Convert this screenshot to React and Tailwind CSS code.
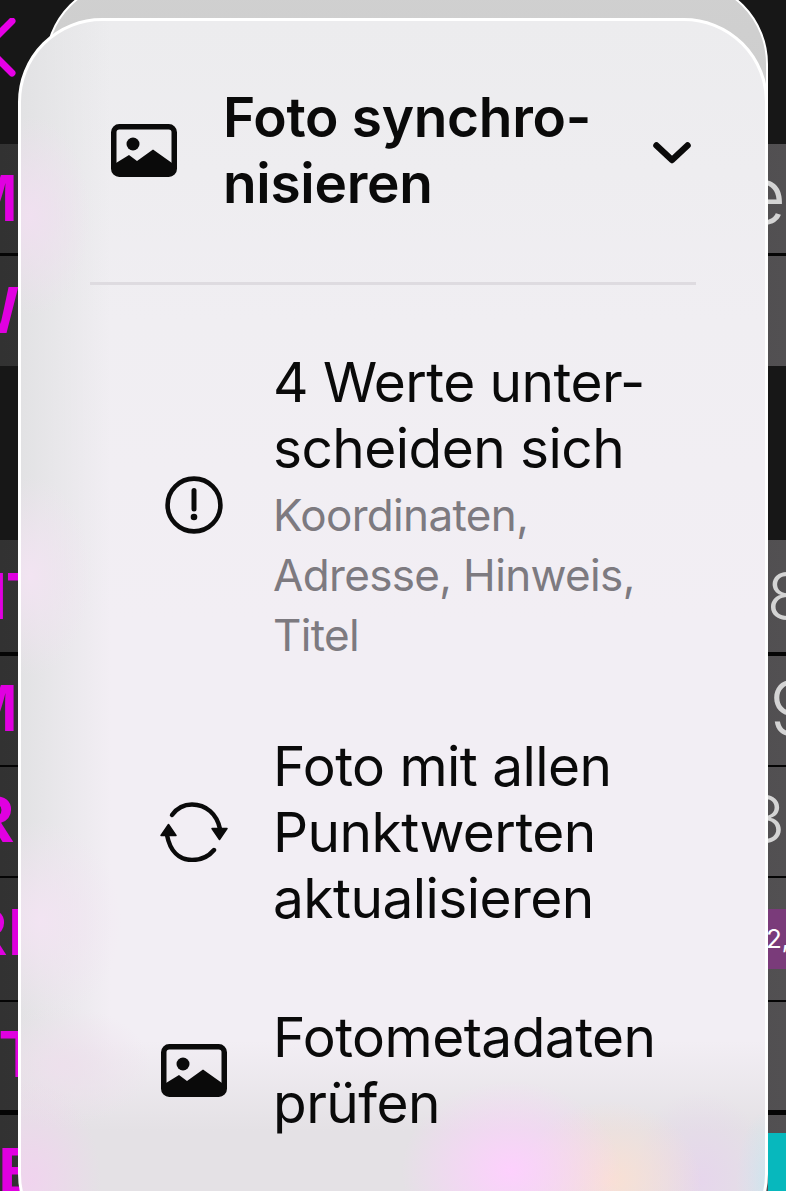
import React from 'react';

// hidden list behind the sheet, only the outer edges of each row show
const rows = [
    { cls: 'h-[112px] pt-[16px] border-b-[3px]', left: 'M', leftCls: '-ml-[37px]', right: 'e', rightCls: 'mr-0 -mt-[3px] text-[80px]' },
    { cls: 'h-[110px] pt-[16px] mb-[174px]', left: 'W', leftCls: '-ml-[44px]' },
    { cls: 'h-[116px] pt-[18px] border-b-[4px]', left: 'IT', leftCls: '-ml-[11px]', right: '8', rightCls: '-mr-[21px]' },
    { cls: 'h-[111px] pt-[14px] border-b-[2px]', left: 'M', leftCls: '-ml-[37px]', right: '49', rightCls: '-mr-[28px] text-[74px]' },
    { cls: 'h-[111px] pt-[14px] border-b-[2px]', left: 'R', leftCls: '-ml-[33px]', right: '3', rightCls: 'mr-[1px]' },
    { cls: 'h-[124px] pt-[16px] border-b-[2px]', left: 'RE', leftCls: '-ml-[40px]', badge: true },
    { cls: 'h-[113px] pt-[14px] border-b-[5px]', left: 'T', leftCls: 'ml-0' },
    { cls: 'h-[76px] pt-[18px]', left: 'E', leftCls: '-ml-[2px]', teal: true },
];

const PhotoIcon = ({ className }) => (
    <svg viewBox="0 0 66 53" className={className} fill="none">
        <rect x="2.75" y="2.75" width="60.5" height="47.5" rx="5.5" stroke="#0a0a0a" strokeWidth="5.5" />
        <circle cx="22" cy="20" r="6.5" fill="#0a0a0a" />
        <path d="M5 39 L18 31 L26 37 L42 25.5 L61 39 V48 Q61 50 59 50 H7 Q5 50 5 48 Z" fill="#0a0a0a" />
    </svg>
);

const AlertIcon = ({ className }) => (
    <svg viewBox="0 0 58 58" className={className} fill="none">
        <circle cx="29" cy="29" r="26.4" stroke="#0a0a0a" strokeWidth="4.6" />
        <path d="M29 14.5 V33" stroke="#0a0a0a" strokeWidth="5" strokeLinecap="round" />
        <circle cx="29" cy="41" r="3.3" fill="#0a0a0a" />
    </svg>
);

const SyncIcon = ({ className }) => (
    <svg viewBox="0 0 70 60" className={className} fill="none">
        <path d="M13 13 C18 6 25 2.5 33 2.5 C47 2.5 58 12 61 27" stroke="#0a0a0a" strokeWidth="4.4" strokeLinecap="round" />
        <path d="M55 48 C50 54 42 58 33 58 C20 58 11 49 8 33" stroke="#0a0a0a" strokeWidth="4.4" strokeLinecap="round" />
        <path d="M53 26.5 H68 L60.5 37.5 Z" fill="#0a0a0a" stroke="#0a0a0a" strokeWidth="1.5" strokeLinejoin="round" />
        <path d="M2 33.5 H17 L9.5 22.5 Z" fill="#0a0a0a" stroke="#0a0a0a" strokeWidth="1.5" strokeLinejoin="round" />
    </svg>
);

const App = () => {
    return (
        <div className="relative w-[786px] h-[1191px] overflow-hidden bg-[#171717] font-['Inter',sans-serif]">
            {/* list behind the sheet */}
            <div className="h-[144px] pt-[18px]">
                <svg viewBox="0 0 20 60" className="w-[20px] h-[60px]" fill="none">
                    <path d="M12 3 L-14 29 L12 55" stroke="#e600e6" strokeWidth="7" strokeLinecap="round" strokeLinejoin="round" />
                </svg>
            </div>
            {rows.map((row, i) => (
                <div
                    key={i}
                    className={`${row.cls} flex justify-between overflow-hidden border-[#050505] bg-gradient-to-r from-[#323232] to-[#525052] text-[66px] leading-[76px]`}
                >
                    <span className={`${row.leftCls} font-['Liberation_Sans',sans-serif] font-bold text-[#e000e0]`}>
                        {row.left}
                    </span>
                    {row.right && <span className={`${row.rightCls} font-light text-[#d4d4d4]`}>{row.right}</span>}
                    {row.badge && (
                        <div className="self-start mt-[15px] w-[18px] h-[60px] bg-[#7a3b7a] text-white text-[26px] leading-[60px] whitespace-nowrap overflow-hidden">
                            <span className="-ml-[2px]">2,</span>
                        </div>
                    )}
                    {row.teal && <div className="w-[18px] bg-[#07b8bd]" />}
                </div>
            ))}

            {/* stacked sheet behind */}
            <div className="absolute left-[45px] top-[-20px] w-[723px] h-[400px] rounded-[84px] border-[2px] border-white bg-gradient-to-b from-[#d0d0d0] to-[#c8c8c8]" />

            {/* menu sheet */}
            <div className="absolute left-[18px] top-[18px] w-[750px] h-[1240px] rounded-[84px] border-[3px] border-white overflow-hidden bg-[radial-gradient(ellipse_110px_90px_at_490px_1150px,#fdd0fd,transparent),radial-gradient(ellipse_90px_80px_at_590px_1160px,#f9e0d4,transparent),radial-gradient(ellipse_70px_90px_at_680px_1160px,#e6d6ec,transparent),radial-gradient(ellipse_30px_70px_at_745px_1160px,#cde6ee,transparent),radial-gradient(ellipse_70px_100px_at_10px_1160px,#f0d4ee,transparent),radial-gradient(ellipse_90px_60px_at_40px_1045px,#ede0ec,transparent),radial-gradient(ellipse_60px_100px_at_10px_195px,#f0e0f0,transparent),radial-gradient(ellipse_60px_100px_at_10px_555px,#f2e4f2,transparent),radial-gradient(ellipse_80px_100px_at_20px_900px,#f2e4f2,transparent),linear-gradient(to_bottom,transparent_1020px,#e4e1e5_1110px),linear-gradient(to_right,#e2e2e4,transparent_90px),linear-gradient(to_bottom,#ececee,#f0eef2_300px,#f2eef4_600px)]">
                <div className="text-[#0a0a0a] text-[55px] leading-[66px] whitespace-nowrap tracking-[-0.55px]">
                    <div className="flex items-center pt-[63px] px-[69px]">
                        <PhotoIcon className="ml-[21px] w-[66px] h-[53px] shrink-0" />
                        <div className="ml-[46px] flex-1 font-semibold tracking-[-0.3px]">
                            Foto synchro-
                            <br />
                            nisieren
                        </div>
                        <svg viewBox="0 0 38 22" className="mr-[5px] mt-[5px] w-[38px] h-[22px] shrink-0" fill="none">
                            <path d="M3.5 3.5 L19 18 L34.5 3.5" stroke="#0a0a0a" strokeWidth="6.5" strokeLinecap="round" strokeLinejoin="round" />
                        </svg>
                    </div>
                    <div className="mx-[69px] mt-[66px] h-[3px] bg-[#dedbe0]" />

                    <div className="flex items-center pl-[113px] mt-[64px]">
                        <div className="w-[120px] flex justify-center shrink-0">
                            <AlertIcon className="mb-[5px] w-[58px] h-[58px]" />
                        </div>
                        <div className="ml-[19px]">
                            4 Werte unter-
                            <br />
                            scheiden sich
                            <div className="mt-[4px] text-[44px] leading-[60px] tracking-[-0.65px] text-[#7d7a80]">
                                Koordinaten,
                                <br />
                                Adresse, Hinweis,
                                <br />
                                Titel
                            </div>
                        </div>
                    </div>

                    <div className="flex items-center pl-[113px] mt-[68px]">
                        <div className="w-[120px] flex justify-center shrink-0">
                            <SyncIcon className="w-[70px] h-[60px]" />
                        </div>
                        <div className="ml-[19px]">
                            Foto mit allen
                            <br />
                            Punktwerten
                            <br />
                            aktualisieren
                        </div>
                    </div>

                    <div className="flex items-center pl-[113px] mt-[73px]">
                        <div className="w-[120px] flex justify-center shrink-0">
                            <PhotoIcon className="w-[66px] h-[53px]" />
                        </div>
                        <div className="ml-[19px]">
                            Fotometadaten
                            <br />
                            prüfen
                        </div>
                    </div>
                </div>
            </div>
        </div>
    );
};

export default App;
